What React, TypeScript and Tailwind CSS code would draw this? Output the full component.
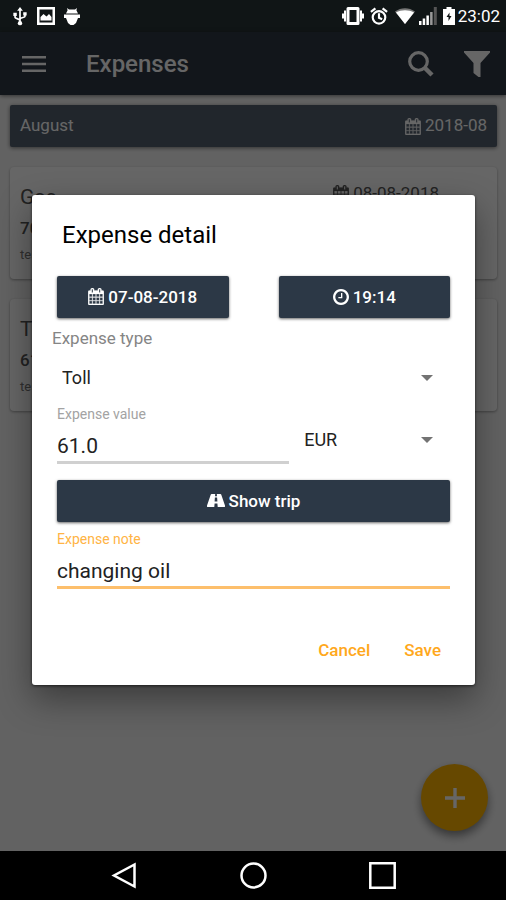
import { useState } from "react";

function CalendarIcon({ className }: { className: string }) {
  return (
    <svg viewBox="64 0 1664 1792" fill="currentColor" stroke="currentColor" strokeWidth="24" className={className}>
      <path d="M192 1664h288v-288h-288v288zM544 1664h320v-288h-320v288zM192 1312h288v-320h-288v320zM544 1312h320v-320h-320v320zM192 928h288v-288h-288v288zM928 1664h320v-288h-320v288zM544 928h320v-288h-320v288zM1312 1664h288v-288h-288v288zM928 1312h320v-320h-320v320zM576 448v-288q0-13-9.5-22.5t-22.5-9.5h-64q-13 0-22.5 9.5t-9.5 22.5v288q0 13 9.5 22.5t22.5 9.5h64q13 0 22.5-9.5t9.5-22.5zM1312 1312h288v-320h-288v320zM928 928h320v-288h-320v288zM1312 928h288v-288h-288v288zM1344 448v-288q0-13-9.5-22.5t-22.5-9.5h-64q-13 0-22.5 9.5t-9.5 22.5v288q0 13 9.5 22.5t22.5 9.5h64q13 0 22.5-9.5t9.5-22.5zM1728 384v1280q0 52-38 90t-90 38h-1408q-52 0-90-38t-38-90v-1280q0-52 38-90t90-38h128v-96q0-66 47-113t113-47h64q66 0 113 47t47 113v96h384v-96q0-66 47-113t113-47h64q66 0 113 47t47 113v96h128q52 0 90 38t38 90z" />
    </svg>
  );
}

function ClockIcon() {
  return (
    <svg viewBox="128 128 1536 1536" fill="currentColor" className="size-4">
      <path d="M1024 544v448q0 14-9 23t-23 9h-320q-14 0-23-9t-9-23v-64q0-14 9-23t23-9h224v-352q0-14 9-23t23-9h64q14 0 23 9t9 23zm416 352q0-148-73-273t-198-198-273-73-273 73-198 198-73 273 73 273 198 198 273 73 273-73 198-198 73-273zm224 0q0 209-103 385.5t-279.5 279.5-385.5 103-385.5-103-279.5-279.5-103-385.5 103-385.5 279.5-279.5 385.5-103 385.5 103 279.5 279.5 103 385.5z" />
    </svg>
  );
}

function RoadIcon() {
  return (
    <svg viewBox="0 0 18 13" fill="currentColor" className="h-[13px] w-[18px]">
      <path
        fillRule="evenodd"
        d="M4.600 0h3.600L8 2.200h2L9.800 0h3.600c.4 0 .7.2.8.6l3.700 10.600c.3.9.2 1.800-.7 1.800h-6.500l-.3-3.600H7.600L7.300 13H.8c-.9 0-1-.9-.7-1.800L3.800.6c.1-.4.4-.6.8-.6zM7.900 3.600 7.600 7.400h2.800l-.3-3.800z"
      />
    </svg>
  );
}

function StatusBar() {
  return (
    <div className="flex h-8 items-center justify-between bg-[#101516] pl-3 pr-[6px] text-white">
      <div className="flex items-center gap-[9px]">
        <svg viewBox="0 0 16 20" fill="none" stroke="currentColor" strokeWidth="1.8" className="h-[19px] w-4">
          <path d="M8 3v13M2.800 8v3c0 1.200 5.200 1.500 5.200 3.500M13.200 7v3c0 1.200-5.200 1-5.200 3" />
          <path d="M8 0l3 4H5zM1 6h3.600v3.500H1zM11.400 5.500H15V9h-3.600z" fill="currentColor" stroke="none" />
          <circle cx="8" cy="17" r="2.3" fill="currentColor" stroke="none" />
        </svg>
        <svg viewBox="0 0 18 18" fill="currentColor" className="size-[18px]">
          <path fillRule="evenodd" d="M0 0h18v18H0zM2.500 2.500v13h13v-13z" />
          <path d="M3.500 13.500V10l3-3 3 2.500L12 7l2.500 3v3.500z" />
        </svg>
        <svg viewBox="0 0 16 17" fill="currentColor" className="h-[17px] w-4">
          <path d="M3 0l2 1.500h6L13 0l-.6 2.300L14 5.500H2l1.600-3.200zM0 6.500h16V10h-2l-2 5-2.500 2h-3L4 15l-2-5H0z" />
        </svg>
      </div>
      <div className="flex items-center">
        <svg viewBox="0 0 22 20" fill="currentColor" className="h-5 w-[22px]">
          <path fillRule="evenodd" d="M6 1h10a1.500 1.500 0 0 1 1.500 1.500v15A1.500 1.500 0 0 1 16 19H6a1.500 1.500 0 0 1-1.500-1.500v-15A1.500 1.500 0 0 1 6 1zM7.500 4v12h7V4z" />
          <path d="M2 4.500h2v11H2zM0 7.500h2v5H0zM18 4.500h2v11h-2zM20 7.500h2v5h-2z" />
        </svg>
        <svg viewBox="0 0 20 20" fill="none" stroke="currentColor" strokeWidth="2.4" className="ml-[6px] size-[18px]">
          <circle cx="10" cy="11.500" r="7" />
          <path d="M10 7v5l3.500 1.500M1 5.500l5-4M19 5.500l-5-4" />
        </svg>
        <svg viewBox="0 0 20 16" className="ml-[7px] h-4 w-5">
          <path d="M0 3.500C6-1 14-1 20 3.500L10 16z" fill="#777" />
          <path d="M1 4.500C6 1.500 14 1.500 19 4.500L10 16z" fill="currentColor" />
        </svg>
        <svg viewBox="0 0 18 18" fill="currentColor" className="ml-1 size-[18px]">
          <path d="M0 14h2.500v4H0zM3.700 11.500h2.500V18H3.700zM7.400 8.500h2.500V18H7.400z" />
          <path d="M11.100 5h2.500v13h-2.500z" fill="#999" />
          <path d="M14.800 0h3v18h-3z" fill="#555" />
        </svg>
        <svg viewBox="0 0 12 18" fill="currentColor" className="ml-[6px] h-[18px] w-3">
          <path fillRule="evenodd" d="M3.500 0h5v2H12v16H0V2h3.500zM6.500 5.500 3.500 10h2v4l3-5h-2z" />
        </svg>
        <span className="ml-[3px] text-[17px] leading-6">23:02</span>
      </div>
    </div>
  );
}

function Toolbar() {
  return (
    <header className="flex h-[63px] items-center bg-[#2d3744] pl-[22px] pr-4 text-white shadow-[0_1px_4px_rgba(0,0,0,0.5)]">
      <button aria-label="Menu">
        <svg viewBox="0 0 24 16" fill="currentColor" className="h-4 w-6">
          <path d="M0 0h24v2.500H0zM0 6.700h24v2.500H0zM0 13.400h24v2.500H0z" />
        </svg>
      </button>
      <h1 className="ml-10 flex-1 text-[24px] font-medium leading-8">Expenses</h1>
      <button aria-label="Search">
        <svg viewBox="0 0 26 26" fill="none" stroke="currentColor" className="size-[26px]">
          <circle cx="10.500" cy="10.500" r="8.800" strokeWidth="3.2" />
          <path d="M16.500 16.500l7.500 7.500" strokeWidth="4.500" />
        </svg>
      </button>
      <button aria-label="Filter" className="ml-[30px]">
        <svg viewBox="0 0 26 26" fill="currentColor" className="size-[26px]">
          <path d="M0 0h26v1.500L16.500 12V26h-2L9.500 22V12L0 1.500z" />
        </svg>
      </button>
    </header>
  );
}

type Expense = { title: string; value: string; note: string; date: string };

const expenses: Expense[] = [
  { title: "Gas", value: "70.0", note: "test", date: "08-08-2018" },
  { title: "Toll", value: "61.0", note: "test", date: "07-08-2018" },
];

function ExpenseCard({ title, value, note, date }: Expense) {
  return (
    <article className="rounded-sm bg-white px-[10px] pb-[14px] pt-4 text-[#555] shadow-[0_1px_3px_rgba(0,0,0,0.35)]">
      <div className="flex items-start justify-between pr-12">
        <h2 className="text-[21px] leading-7">{title}</h2>
        <span className="flex items-center gap-1 text-[17px] leading-5">
          <CalendarIcon className="h-[17px] w-4" />
          {date}
        </span>
      </div>
      <p className="mt-[3px] text-[17px] font-medium leading-7">{value}</p>
      <p className="mt-[3px] text-[13px] leading-5 text-[#777]">{note}</p>
    </article>
  );
}

function Caret() {
  return (
    <svg viewBox="0 0 12 6" fill="#737373" className="pointer-events-none absolute right-[17px] top-[17px] h-[6px] w-3">
      <path d="M0 0h12L6 6z" />
    </svg>
  );
}

const darkButton =
  "flex items-center justify-center gap-1 rounded-[2px] bg-[#2c3846] text-[17px] font-medium leading-5 text-white shadow-[0_1px_3px_rgba(0,0,0,0.6)]";

function ExpenseDialog() {
  const [value, setValue] = useState("61.0");
  const [note, setNote] = useState("changing oil");

  return (
    <form
      role="dialog"
      aria-labelledby="dialog-title"
      className="w-full rounded-[3px] bg-white px-[25px] pb-[14px] pt-6 text-[#222] shadow-[0_14px_34px_rgba(0,0,0,0.4),0_1px_3px_rgba(0,0,0,0.6)]"
    >
      <h2 id="dialog-title" className="px-[5px] text-[24px] leading-8 text-black">
        Expense detail
      </h2>

      <div className="mt-[25px] grid grid-cols-2 gap-[50px]">
        <button type="button" className={`${darkButton} h-[42px]`}>
          <CalendarIcon className="h-[17px] w-4" />
          07-08-2018
        </button>
        <button type="button" className={`${darkButton} h-[42px]`}>
          <ClockIcon />
          19:14
        </button>
      </div>

      <label htmlFor="type" className="-ml-[5px] mt-[10px] block text-[17px] leading-5 text-[#858585]">
        Expense type
      </label>
      <div className="relative mt-[10px]">
        <select id="type" className="block h-10 w-full appearance-none bg-transparent pl-[5px] text-[18px] outline-none">
          <option>Toll</option>
          <option>Gas</option>
        </select>
        <Caret />
      </div>

      <div className="mt-2 grid grid-cols-[13fr_9fr] items-end">
        <div>
          <label htmlFor="value" className="block text-[14px] leading-4 text-[#a3a3a3]">
            Expense value
          </label>
          <input
            id="value"
            value={value}
            onChange={(e) => setValue(e.target.value)}
            className="block h-[42px] w-full border-b-[3px] border-[#d0d0d0] pt-[10px] text-[21px] leading-7 outline-none"
          />
        </div>
        <div className="relative mb-1">
          <select
            aria-label="Currency"
            className="block h-10 w-full appearance-none bg-transparent pl-[15px] text-[18px] outline-none"
          >
            <option>EUR</option>
            <option>USD</option>
          </select>
          <Caret />
        </div>
      </div>

      <button type="button" className={`${darkButton} mt-4 h-[42px] w-full`}>
        <RoadIcon />
        Show trip
      </button>

      <label htmlFor="note" className="mt-[9px] block text-[14px] leading-4 text-[#ffb444]">
        Expense note
      </label>
      <input
        id="note"
        value={note}
        onChange={(e) => setNote(e.target.value)}
        className="block h-[42px] w-full border-b-[3px] border-[#fdbf6c] pt-[10px] text-[21px] leading-7 outline-none"
      />

      <div className="mt-[42px] flex justify-end gap-4 text-[17px] font-medium text-[#ffa81c]">
        <button type="button" className="h-10 px-[9px]">
          Cancel
        </button>
        <button type="button" className="h-10 px-[9px]">
          Save
        </button>
      </div>
    </form>
  );
}

function NavigationBar() {
  return (
    <nav className="flex h-[49px] items-center justify-center gap-[102px] bg-black text-white">
      <button aria-label="Back">
        <svg viewBox="0 0 27 27" fill="none" stroke="currentColor" strokeWidth="2.5" className="size-[27px]">
          <path d="M23.500 2.500v22L3 13.500z" />
        </svg>
      </button>
      <button aria-label="Home">
        <svg viewBox="0 0 27 27" fill="none" stroke="currentColor" strokeWidth="2.5" className="size-[27px]">
          <circle cx="13.500" cy="13.500" r="12" />
        </svg>
      </button>
      <button aria-label="Recent apps">
        <svg viewBox="0 0 27 27" fill="none" stroke="currentColor" strokeWidth="2.5" className="size-[27px]">
          <path d="M1.300 1.300h24.400v24.400H1.300z" />
        </svg>
      </button>
    </nav>
  );
}

export default function App() {
  return (
    <div className="flex min-h-screen flex-col font-['Roboto',sans-serif]">
      <StatusBar />
      <div className="relative flex flex-1 flex-col bg-[#f6f6f6]">
        <Toolbar />
        <main className="flex flex-col gap-5 pl-[10px] pr-[9px] pt-[10px]">
          <div className="flex h-[42px] items-center justify-between rounded-[2px] bg-[#54606f] px-[10px] text-[17px] text-white shadow-[0_1px_4px_rgba(0,0,0,0.5)]">
            <span>August</span>
            <span className="flex items-center gap-1">
              <CalendarIcon className="h-[17px] w-4" />
              2018-08
            </span>
          </div>
          {expenses.map((expense) => (
            <ExpenseCard key={expense.title} {...expense} />
          ))}
        </main>
        <button
          aria-label="Add expense"
          className="absolute bottom-5 right-[18px] flex size-[67px] items-center justify-center rounded-full bg-[#ffb400] text-white shadow-[0_5px_10px_rgba(0,0,0,0.45)]"
        >
          <svg viewBox="0 0 20 20" fill="currentColor" className="size-5">
            <path d="M8.300 0h3.400v8.300H20v3.400h-8.300V20H8.300v-8.300H0V8.300h8.300z" />
          </svg>
        </button>
        <div className="absolute inset-0 flex items-center bg-black/60 pb-1 pl-8 pr-[31px]">
          <ExpenseDialog />
        </div>
      </div>
      <NavigationBar />
    </div>
  );
}
